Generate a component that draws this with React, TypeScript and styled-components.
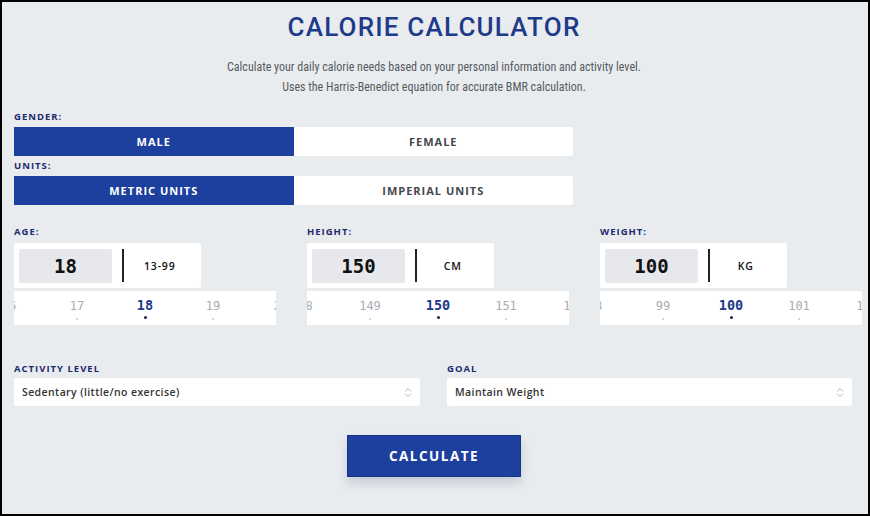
import React, { useState } from 'react';
import styled, { createGlobalStyle } from 'styled-components';

const GlobalStyle = createGlobalStyle`
  html, body {
    margin: 0;
    padding: 0;
  }
  body {
    font-family: 'Open Sans', 'Noto Sans', sans-serif;
  }
`;

const Frame = styled.div`
  box-sizing: border-box;
  width: 870px;
  height: 516px;
  border: 2px solid #000;
  background: #e9ecef;
  padding: 0 14px 0 12px;
  overflow: hidden;
`;
const Title = styled.h1`
  margin: 10px 0 0;
  text-align: center;
  font-family: Roboto, 'Liberation Sans', sans-serif;
  font-weight: 500;
  font-size: 26px;
  line-height: 30px;
  letter-spacing: 1.2px;
  color: #1e3a8a;
`;
const Subtitle = styled.p`
  margin: 15px 0 0;
  text-align: center;
  font-family: 'Liberation Sans Narrow', 'Roboto Condensed', Roboto, sans-serif;
  font-size: 12px;
  line-height: 20px;
  color: #555b61;
`;
const Label = styled.div<{ $top?: number }>`
  margin-top: ${ p => p.$top ?? 0 }px;
  font-size: 9.5px;
  line-height: 14px;
  font-weight: 700;
  letter-spacing: 1px;
  text-transform: uppercase;
  color: #1e2a6e;
`;
const Toggle = styled.div`
  display: flex;
  width: 559px;
  height: 29px;
  margin-top: 3px;
`;
const ToggleButton = styled.button<{ $active: boolean }>`
  flex: 1;
  border: none;
  cursor: pointer;
  font-family: 'Open Sans', sans-serif;
  font-size: 11px;
  font-weight: 700;
  letter-spacing: 1px;
  background: ${ p => (p.$active ? '#1d3f9e' : '#ffffff') };
  color: ${ p => (p.$active ? '#ffffff' : '#44474c') };
  border-radius: ${ p => (p.$active ? '0' : '0 2px 2px 0') };
`;
const Measures = styled.div`
  display: grid;
  grid-template-columns: repeat(3, 262px);
  column-gap: 31px;
  margin-top: 20px;
`;
const Measure = styled.div`
  display: flex;
  flex-direction: column;
`;
const ValueCard = styled.div`
  display: flex;
  align-items: center;
  box-sizing: border-box;
  width: 187px;
  height: 45px;
  margin-top: 4px;
  padding: 5px;
  background: #fff;
  border-radius: 2px;
`;
const ValueField = styled.div`
  display: flex;
  align-items: center;
  justify-content: center;
  width: 93px;
  height: 34px;
  background: #e6e8eb;
  border-radius: 2px;
  font-family: 'DejaVu Sans Mono', 'Liberation Mono', monospace;
  font-size: 19px;
  font-weight: 600;
  color: #111;
`;
const Divider = styled.div`
  width: 1.5px;
  height: 33px;
  margin-left: 10px;
  background: #222;
`;
const Unit = styled.div`
  flex: 1;
  text-align: center;
  font-size: 10.5px;
  font-weight: 600;
  letter-spacing: 0.8px;
  color: #111;
`;
const Ruler = styled.div`
  display: flex;
  justify-content: center;
  height: 34px;
  margin-top: 3px;
  background: #fff;
  overflow: hidden;
`;
const Tick = styled.div<{ $current: boolean }>`
  flex: 0 0 68px;
  display: flex;
  flex-direction: column;
  align-items: center;
  padding-top: ${ p => (p.$current ? 6 : 7) }px;
  font-family: 'DejaVu Sans Mono', 'Liberation Mono', monospace;
  font-size: ${ p => (p.$current ? 13.5 : 12) }px;
  line-height: 16px;
  font-weight: ${ p => (p.$current ? 700 : 400) };
  color: ${ p => (p.$current ? '#1e3a8a' : '#a8acb1') };
  &::after {
    content: '';
    margin-top: ${ p => (p.$current ? 3 : 4) }px;
    width: ${ p => (p.$current ? 3 : 2) }px;
    height: ${ p => (p.$current ? 3 : 2) }px;
    border-radius: 50%;
    background: ${ p => (p.$current ? '#1a2250' : '#c4c7cc') };
  }
`;
const Selects = styled.div`
  display: grid;
  grid-template-columns: 406px 405px;
  column-gap: 27px;
  margin-top: 37px;
`;
const SelectBox = styled.div`
  display: flex;
  align-items: center;
  justify-content: space-between;
  height: 28px;
  margin-top: 2px;
  padding: 0 8px;
  background: #fff;
  border-radius: 2px;
  font-size: 10.5px;
  font-weight: 600;
  letter-spacing: 0.4px;
  color: #333;
`;
const Footer = styled.div`
  display: flex;
  justify-content: center;
  margin-top: 29px;
`;
const CalcButton = styled.button`
  width: 174px;
  height: 42px;
  border: 1px solid #18338a;
  background: #1d3f9e;
  color: #fff;
  font-family: 'Open Sans', sans-serif;
  font-size: 13.5px;
  font-weight: 700;
  letter-spacing: 1.5px;
  box-shadow: 0 6px 10px rgba(40, 60, 90, 0.18);
  cursor: pointer;
`;

function Chevrons() {
  return (
    <svg width="8" height="11" viewBox="0 0 8 11" fill="none" stroke="#a9adb3" strokeWidth="1" strokeLinecap="round" strokeLinejoin="round">
      <path d="M1.5 4L4 1.5L6.5 4" />
      <path d="M1.5 7L4 9.5L6.5 7" />
    </svg>
  );
}

type MeasureInfo = { label: string; value: number; unit: string };

function MeasureBlock({ label, value, unit }: MeasureInfo) {
  const ticks = [value - 2, value - 1, value, value + 1, value + 2];
  return (
    <Measure>
      <Label>{ label }</Label>
      <ValueCard>
        <ValueField>{ value }</ValueField>
        <Divider />
        <Unit>{ unit }</Unit>
      </ValueCard>
      <Ruler>
        { ticks.map(t => <Tick key={ t } $current={ t === value }>{ t }</Tick>) }
      </Ruler>
    </Measure>
  );
}

export default function App() {
  const [ gender, setGender ] = useState('male');
  const [ units, setUnits ] = useState('metric');

  return (
    <Frame>
      <GlobalStyle />
      <Title>CALORIE CALCULATOR</Title>
      <Subtitle>
        Calculate your daily calorie needs based on your personal information and activity level.
        <br />
        Uses the Harris-Benedict equation for accurate BMR calculation.
      </Subtitle>

      <Label $top={ 13 }>Gender:</Label>
      <Toggle>
        <ToggleButton $active={ gender === 'male' } onClick={ () => setGender('male') }>MALE</ToggleButton>
        <ToggleButton $active={ gender === 'female' } onClick={ () => setGender('female') }>FEMALE</ToggleButton>
      </Toggle>

      <Label $top={ 3 }>Units:</Label>
      <Toggle>
        <ToggleButton $active={ units === 'metric' } onClick={ () => setUnits('metric') }>METRIC UNITS</ToggleButton>
        <ToggleButton $active={ units === 'imperial' } onClick={ () => setUnits('imperial') }>IMPERIAL UNITS</ToggleButton>
      </Toggle>

      <Measures>
        <MeasureBlock label="Age:" value={ 18 } unit="13-99" />
        <MeasureBlock label="Height:" value={ 150 } unit="CM" />
        <MeasureBlock label="Weight:" value={ 100 } unit="KG" />
      </Measures>

      <Selects>
        <div>
          <Label>Activity Level</Label>
          <SelectBox>Sedentary (little/no exercise)<Chevrons /></SelectBox>
        </div>
        <div>
          <Label>Goal</Label>
          <SelectBox>Maintain Weight<Chevrons /></SelectBox>
        </div>
      </Selects>

      <Footer>
        <CalcButton>CALCULATE</CalcButton>
      </Footer>
    </Frame>
  );
}
